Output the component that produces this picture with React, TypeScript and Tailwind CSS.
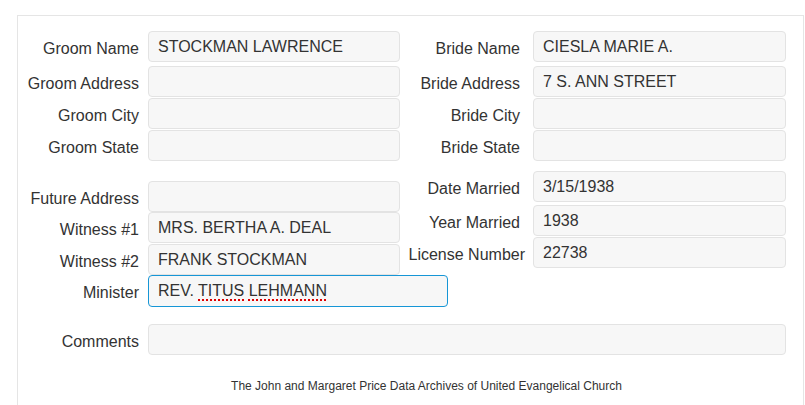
import React from "react";

type FieldProps = {
  label: string;
  value?: React.ReactNode;
  labelClass: string;
  inputClass: string;
  rowClass?: string;
  focused?: boolean;
};

function Field({ label, value, labelClass, inputClass, rowClass = "", focused }: FieldProps) {
  return (
    <div className={`flex items-center ${rowClass}`}>
      <div className={`shrink-0 whitespace-nowrap pt-[4px] text-right text-[16px] text-[#333] ${labelClass}`}>{label}</div>
      <div
        className={`flex h-[31px] shrink-0 items-center rounded-[4px] bg-[#f7f7f7] pl-[9px] text-[16px] text-[#333] ${
          focused ? "border-[1.5px] border-[#1696d6]" : "border border-[#e3e3e3]"
        } ${inputClass}`}
      >
        {value}
      </div>
    </div>
  );
}

const leftLabel = "w-[121px] mr-[9px]";
const leftInput = "w-[252px]";
const rightLabel = "w-[120px] mr-[13px]";
const rightInput = "w-[253px]";

export default function App() {
  return (
    <div className="h-[405px] w-[805px] overflow-hidden bg-white pt-[15px] pl-[17px]" style={{ fontFamily: '"Liberation Sans", Arial, sans-serif' }}>
      <div className="h-[420px] w-[787px] border border-[#e5e5e5] pt-[15px]">
        <div className="flex">
          <div className="flex w-[382px] flex-col">
            <Field label="Groom Name" value="STOCKMAN LAWRENCE" labelClass={leftLabel} inputClass={leftInput} />
            <Field label="Groom Address" labelClass={leftLabel} inputClass={leftInput} rowClass="mt-[4px]" />
            <Field label="Groom City" labelClass={leftLabel} inputClass={leftInput} rowClass="mt-[1px]" />
            <Field label="Groom State" labelClass={leftLabel} inputClass={leftInput} rowClass="mt-[1px]" />
            <Field label="Future Address" labelClass={leftLabel} inputClass={leftInput} rowClass="mt-[20px]" />
            <Field label="Witness #1" value="MRS. BERTHA A. DEAL" labelClass={leftLabel} inputClass={leftInput} />
            <Field label="Witness #2" value="FRANK STOCKMAN" labelClass={leftLabel} inputClass={leftInput} rowClass="mt-[1px]" />
            <Field
              label="Minister"
              focused
              value={
                <span>
                  REV.{" "}
                  <span className="underline decoration-[#e00000] decoration-dotted decoration-[1.5px] underline-offset-[3px]">TITUS</span>{" "}
                  <span className="underline decoration-[#e00000] decoration-dotted decoration-[1.5px] underline-offset-[3px]">LEHMANN</span>
                </span>
              }
              labelClass={leftLabel}
              inputClass="w-[300px] !h-[32px]"
            />
          </div>
          <div className="flex w-[386px] flex-col">
            <Field label="Bride Name" value="CIESLA MARIE A." labelClass={rightLabel} inputClass={rightInput} />
            <Field label="Bride Address" value="7 S. ANN STREET" labelClass={rightLabel} inputClass={rightInput} rowClass="mt-[4px]" />
            <Field label="Bride City" labelClass={rightLabel} inputClass={rightInput} rowClass="mt-[1px]" />
            <Field label="Bride State" labelClass={rightLabel} inputClass={rightInput} rowClass="mt-[1px]" />
            <Field label="Date Married" value="3/15/1938" labelClass={rightLabel} inputClass={rightInput} rowClass="mt-[10px]" />
            <Field label="Year Married" value="1938" labelClass={rightLabel} inputClass={rightInput} rowClass="mt-[3px]" />
            <Field label="License Number" value="22738" labelClass={`${rightLabel} translate-x-[5px]`} inputClass={rightInput} rowClass="mt-[1px]" />
          </div>
        </div>
        <Field label="Comments" labelClass={leftLabel} inputClass="w-[638px]" rowClass="mt-[17px]" />
        <div className="mt-[22px] pl-[32px] text-center text-[12px] text-[#333]">
          The John and Margaret Price Data Archives of United Evangelical Church
        </div>
      </div>
    </div>
  );
}
